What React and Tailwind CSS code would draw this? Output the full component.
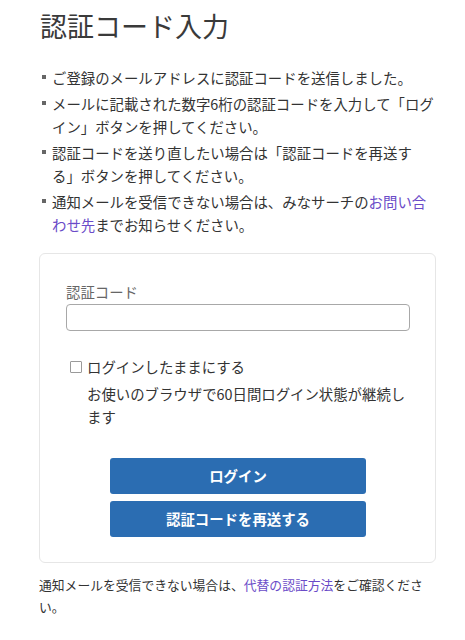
import { useState } from 'react'

const notes = [
  { text: 'ご登録のメールアドレスに認証コードを送信しました。' },
  { text: 'メールに記載された数字6桁の認証コードを入力して「ログイン」ボタンを押してください。' },
  { text: '認証コードを送り直したい場合は「認証コードを再送する」ボタンを押してください。' },
  { text: '通知メールを受信できない場合は、みなサーチの', link: 'お問い合わせ先', after: 'までお知らせください。' },
]

const App = () => {
  const [code, setCode] = useState('')
  const [keep, setKeep] = useState(false)

  return (
    <div
      className="min-h-screen bg-white text-[#333] pl-[40px] pr-[29px] [text-spacing-trim:space-all]"
      style={{ fontFamily: '"Noto Sans CJK JP", "Noto Sans", sans-serif' }}
    >
      <h1 className="pt-[7px] text-[27px] leading-[38px] font-normal text-[#3a3a3a]">認証コード入力</h1>

      {/* Notes */}
      <ul className="mt-[21px] pl-[2px] flex flex-col gap-[3px] text-[14.4px] leading-[23px]">
        {notes.map((n, i) => (
          <li key={i} className="flex">
            <span className="w-[10px] shrink-0 flex pt-[9px]">
              <span className="w-[4px] h-[4px] bg-[#666]"></span>
            </span>
            <span>
              {n.text}
              {n.link && <a href="#" className="text-[#6a4bc8]">{n.link}</a>}
              {n.after}
            </span>
          </li>
        ))}
      </ul>

      {/* Form card */}
      <div className="mt-[17px] -ml-[1px] border border-[#e6e6e6] rounded-[6px] pt-[26px] pb-[25px] pl-[26px] pr-[25px]">
        <label className="block text-[14.4px] leading-[23px] text-[#666]">認証コード</label>
        <input
          type="text"
          value={code}
          onChange={(e) => setCode(e.target.value)}
          className="mt-[1px] block w-full h-[27px] border border-[#a8a8a8] rounded-[4px] px-2 text-[14px] outline-none"
        />

        <label className="mt-[24px] flex items-center text-[14.4px] leading-[23px] cursor-pointer">
          <span className="w-[21px] shrink-0 flex pl-[4px]">
            <input
              type="checkbox"
              checked={keep}
              onChange={(e) => setKeep(e.target.checked)}
              className="appearance-none w-[12px] h-[12px] border border-[#9a9a9a] rounded-[1px] bg-white"
            />
          </span>
          ログインしたままにする
        </label>
        <p className="mt-[4px] pl-[21px] text-[14.4px] leading-[23px]">
          お使いのブラウザで60日間ログイン状態が継続します
        </p>

        <div className="mt-[30px] flex flex-col items-center gap-[7px]">
          <button className="w-[256px] h-[36px] bg-[#2b6db2] rounded-[3px] text-white font-bold text-[14.4px]">
            ログイン
          </button>
          <button className="w-[256px] h-[36px] bg-[#2b6db2] rounded-[3px] text-white font-bold text-[14.4px]">
            認証コードを再送する
          </button>
        </div>
      </div>

      <p className="mt-[11px] -ml-[1px] text-[12.8px] leading-[22px]">
        通知メールを受信できない場合は、<a href="#" className="text-[#6a4bc8]">代替の認証方法</a>をご確認ください。
      </p>
    </div>
  )
}

export default App
